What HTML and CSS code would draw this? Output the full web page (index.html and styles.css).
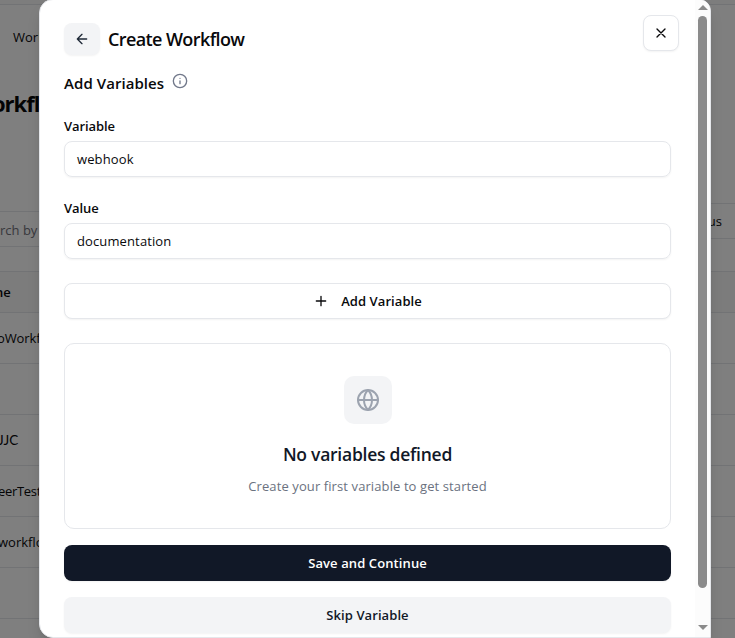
FILE: index.html
```html
<!DOCTYPE html>
<html lang="en">
<head>
<meta charset="utf-8">
<title>Create Workflow</title>
<link rel="stylesheet" href="styles.css">
</head>
<body>
<div class="page">
  <div class="topline"></div>
  <nav class="nav"><span class="nav-link">Workflows</span></nav>
  <h1 class="page-title"><span>orkflows</span></h1>
  <div class="toolbar">
    <div class="search"><span>rch by</span></div>
    <div class="status"><span>Status</span></div>
  </div>
  <div class="table">
    <div class="row head"><span class="cell name">ne</span></div>
    <div class="row"><span class="cell demo">oWorkflow</span></div>
    <div class="row"></div>
    <div class="row"><span class="cell jjc">JJC</span></div>
    <div class="row"><span class="cell career">eerTest</span></div>
    <div class="row"><span class="cell flow">workflow</span></div>
    <div class="row"></div>
    <div class="row"></div>
  </div>
</div>
<div class="overlay">
  <section class="modal" role="dialog">
    <div class="content">
      <header class="header">
        <button class="btn back" aria-label="Back"><svg width="16" height="16" viewBox="0 0 24 24"><path d="m12 19-7-7 7-7M19 12H5"/></svg></button>
        <h2 class="title">Create Workflow</h2>
        <button class="btn close" aria-label="Close"><svg width="16" height="16" viewBox="0 0 24 24"><path d="M18 6 6 18M6 6l12 12"/></svg></button>
      </header>
      <div class="section"><h3 class="section-title">Add Variables</h3><svg class="info" width="16" height="16" viewBox="0 0 24 24"><circle cx="12" cy="12" r="10"/><path d="M12 16v-4M12 8h.01"/></svg></div>
      <label class="label">Variable</label>
      <div class="input"><span class="webhook">webhook</span></div>
      <label class="label">Value</label>
      <div class="input"><span class="documentation">documentation</span></div>
      <button class="btn add"><svg width="16" height="16" viewBox="0 0 24 24"><path d="M5 12h14M12 5v14"/></svg><span>Add Variable</span></button>
      <div class="empty">
        <div class="globe"><svg width="24" height="24" viewBox="0 0 24 24"><circle cx="12" cy="12" r="10"/><path d="M12 2a14.5 14.5 0 0 0 0 20 14.5 14.5 0 0 0 0-20M2 12h20"/></svg></div>
        <h4 class="empty-title">No variables defined</h4>
        <p class="empty-text">Create your first variable to get started</p>
      </div>
      <button class="btn save">Save and Continue</button>
      <button class="btn skip">Skip Variable</button>
    </div>
    <div class="scrollbar"><i class="up"></i><i class="thumb"></i><i class="down"></i></div>
  </section>
</div>
</body>
</html>
```
FILE: styles.css
```css
* { box-sizing: border-box; }
body { margin: 0; height: 638px; overflow: hidden; background: #fff; color: #09090b; font: 13px/20px "Open Sans", "Noto Sans", sans-serif; }
h1, h2, h3, h4, p { margin: 0; }
svg { display: block; flex: none; fill: none; stroke: currentColor; stroke-width: 2; stroke-linecap: round; stroke-linejoin: round; }

.page { height: 638px; overflow: hidden; }
.topline { height: 5px; background: #fafafa; border-bottom: 1px solid #e5e7eb; }
.nav { height: 64px; padding: 22px 13px; }
.page-title { height: 70px; padding-top: 14px; font-size: 22px; line-height: 40px; font-weight: 700; letter-spacing: -1px; margin-left: -8px; }
.toolbar { height: 132px; padding-top: 64px; display: flex; justify-content: space-between; }
.search { width: 60px; height: 36px; margin-top: 8px; border: solid #e5e7eb; border-width: 1px 0; color: #71717a; line-height: 36px; white-space: nowrap; }
.status { width: 60px; height: 36px; border: solid #e5e7eb; border-width: 1px 0; line-height: 34px; display: flex; justify-content: flex-end; padding-right: 13px; }
.table { border-top: 1px solid #e5e7eb; }
.row { height: 51px; border-bottom: 1px solid #e5e7eb; display: flex; align-items: center; }
.head { height: 41px; background: #f8f8f9; font-weight: 600; }
.cell { flex: none; white-space: nowrap; }
.name { margin-left: -5px; }
.demo { margin-left: -3px; letter-spacing: -.1px; }
.jjc { margin-left: -2px; font-family: Lato, sans-serif; font-size: 13.5px; }
.career { margin-left: -2px; letter-spacing: -.3px; }
.flow { margin-left: -2px; }

.overlay { position: absolute; inset: 0; background: rgba(0, 0, 0, .5); overflow: hidden; padding-left: 39px; }
.modal { width: 672px; height: 639px; margin-top: -1px; display: flex; background: #fff; border: 1px solid #e5e7eb; border-radius: 14px 12px 0 14px; box-shadow: 0 10px 15px -3px rgba(0, 0, 0, .15), 0 4px 6px -4px rgba(0, 0, 0, .1); }
.content { width: 655px; padding: 23px 24px 0; }
.header { display: flex; align-items: flex-start; margin-right: -8px; }
.title { flex: 1; margin-left: 8px; font-size: 18px; line-height: 32px; font-weight: 600; letter-spacing: -.6px; }
.btn { height: 36px; padding: 0; border: 0; border-radius: 8px; display: flex; align-items: center; justify-content: center; font: 600 13px/20px "Open Sans", "Noto Sans", sans-serif; color: #09090b; box-shadow: 0 1px 2px rgba(0, 0, 0, .05); }
.back { width: 36px; height: 32px; background: #f3f4f6; color: #1f2937; }
.close { width: 36px; margin-top: -8px; background: #fff; border: 1px solid #e5e7eb; }
.section { height: 24px; margin: 16px 0 21px; display: flex; align-items: center; gap: 8px; }
.section-title { font-size: 15px; line-height: 24px; font-weight: 600; letter-spacing: .06px; }
.info { color: #71788a; margin-bottom: 5px; }
.label { display: block; height: 20px; margin-bottom: 5px; font-weight: 600; letter-spacing: -.08px; }
.input { height: 36px; margin-bottom: 21px; padding: 7px 12px; border: 1px solid #e5e7eb; border-radius: 8px; box-shadow: 0 1px 2px rgba(0, 0, 0, .05); letter-spacing: .12px; }
.add { width: 100%; margin-top: 24px; gap: 12px; background: #fff; border: 1px solid #e5e7eb; letter-spacing: .08px; }
.empty { height: 186px; margin: 24px 0 16px; padding-top: 32px; border: 1px solid #e5e7eb; border-radius: 10px; display: flex; flex-direction: column; align-items: center; }
.globe { width: 48px; height: 48px; border-radius: 10px; background: #f3f4f6; color: #9ca3af; display: flex; align-items: center; justify-content: center; }
.empty-title { margin-top: 16px; font-size: 17.5px; line-height: 28px; font-weight: 600; letter-spacing: -.25px; color: #111827; }
.empty-text { margin-top: 8px; color: #6b7280; letter-spacing: .1px; }
.save { width: 100%; background: #111827; color: #fff; letter-spacing: .1px; }
.skip { width: 100%; margin-top: 16px; background: #f3f4f6; color: #111827; letter-spacing: .08px; }
.scrollbar { width: 15px; background: #fcfcfc; display: flex; flex-direction: column; align-items: center; padding-top: 5px; border-top-right-radius: 10px; }
.up, .down { border: solid transparent; border-width: 0 5px; }
.up { border-bottom: 5px solid #8b8b8b; }
.down { border-top: 5px solid #8b8b8b; margin-top: 37px; }
.thumb { width: 9px; height: 572px; margin-top: 6px; border-radius: 5px; background: #8b8b8b; }
```
